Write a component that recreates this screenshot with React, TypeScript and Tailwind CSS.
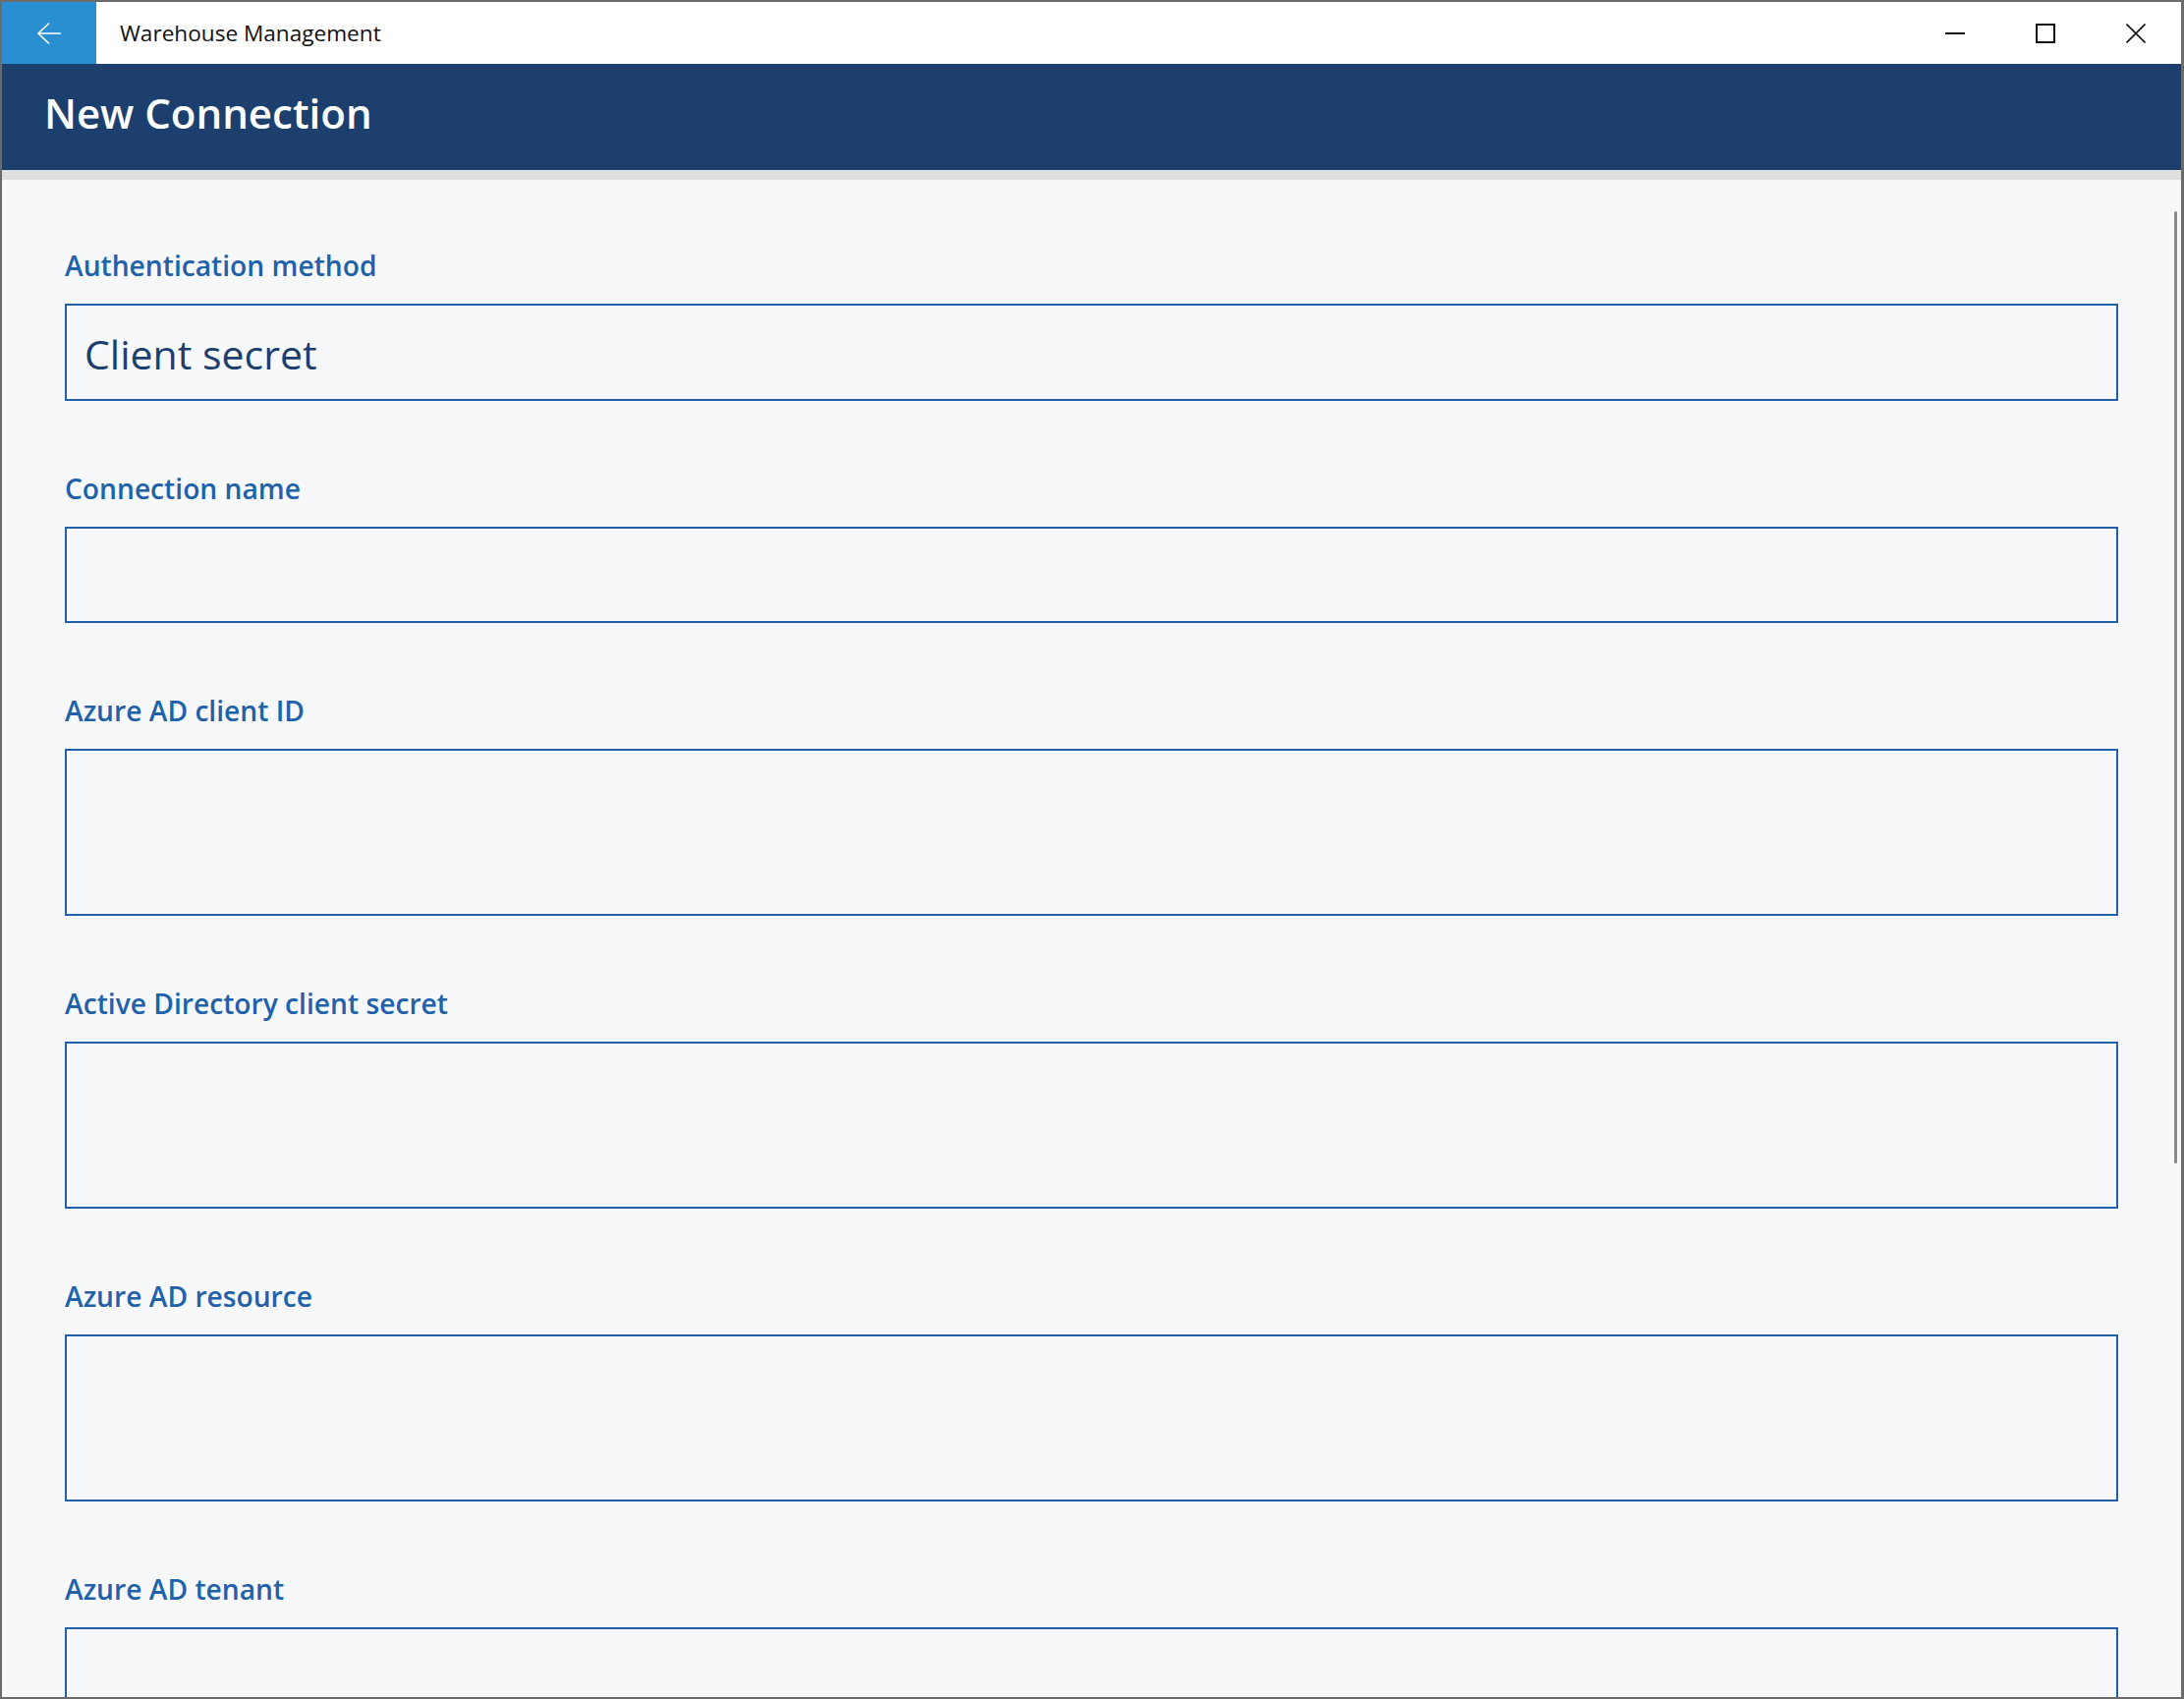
import React from "react";

const fields = [
  { label: "Authentication method", value: "Client secret", h: "h-[99px]" },
  { label: "Connection name", value: "", h: "h-[98px]" },
  { label: "Azure AD client ID", value: "", h: "h-[170px]" },
  { label: "Active Directory client secret", value: "", h: "h-[170px]" },
  { label: "Azure AD resource", value: "", h: "h-[170px]" },
  { label: "Azure AD tenant", value: "", h: "h-[170px]" },
];

function TitleBar() {
  return (
    <div className="flex h-[63px] shrink-0 items-stretch bg-white">
      <button className="flex w-[96px] items-center justify-center bg-[#2a8fd0]">
        <svg width="26" height="24" viewBox="0 0 26 24" fill="none">
          <path d="M25 12H2M13 1.5L2 12l11 10.5" stroke="#fff" strokeWidth="1.6" />
        </svg>
      </button>
      <div className="flex flex-1 items-center pl-[24px] text-[22.6px] text-[#111] [font-family:'Open_Sans',sans-serif]">
        Warehouse Management
      </div>
      <div className="flex">
        <button className="flex w-[92px] items-center justify-center">
          <svg width="20" height="20" viewBox="0 0 20 20">
            <path d="M0 10h20" stroke="#111" strokeWidth="2" />
          </svg>
        </button>
        <button className="flex w-[92px] items-center justify-center">
          <svg width="20" height="20" viewBox="0 0 20 20" fill="none">
            <rect x="1" y="1" width="18" height="18" stroke="#111" strokeWidth="2" />
          </svg>
        </button>
        <button className="flex w-[92px] items-center justify-center">
          <svg width="20" height="20" viewBox="0 0 20 20" fill="none">
            <path d="M0.5 0.5l19 19M19.5 0.5l-19 19" stroke="#111" strokeWidth="1.6" />
          </svg>
        </button>
      </div>
    </div>
  );
}

export default function App() {
  return (
    <div className="flex h-[1729px] w-[2223px] flex-col overflow-hidden border-t-2 border-b-2 border-l-2 border-r-[3px] border-[#6b6b6b] bg-[#f7f8fa] [font-family:'Open_Sans',sans-serif]">
      <TitleBar />
      <div className="flex h-[108px] shrink-0 items-center bg-[#1c3f6e] pb-[10px] pl-[43px] text-[42px] font-semibold text-white">
        New Connection
      </div>
      <div className="h-[10px] shrink-0 bg-[#dfe0e2]" />

      <div className="relative flex-1 overflow-hidden">
        <div className="flex flex-col gap-[66px] px-[64px] pt-[64px]">
          {fields.map((f) => (
            <div key={f.label} className="flex flex-col">
              <div className="h-[40px] text-[28.2px] leading-[46px] font-semibold text-[#2161aa]">
                {f.label}
              </div>
              <div
                className={`mt-[22px] flex ${f.h} shrink-0 items-center border-2 border-[#2161aa] pt-[4px] pl-[18px] text-[41px] font-normal text-[#1c3f6e]`}
              >
                {f.value}
              </div>
            </div>
          ))}
        </div>
        <div className="absolute top-[32px] right-[4px] h-[969px] w-[3px] rounded-full bg-[#8a8a8a]" />
      </div>
    </div>
  );
}
